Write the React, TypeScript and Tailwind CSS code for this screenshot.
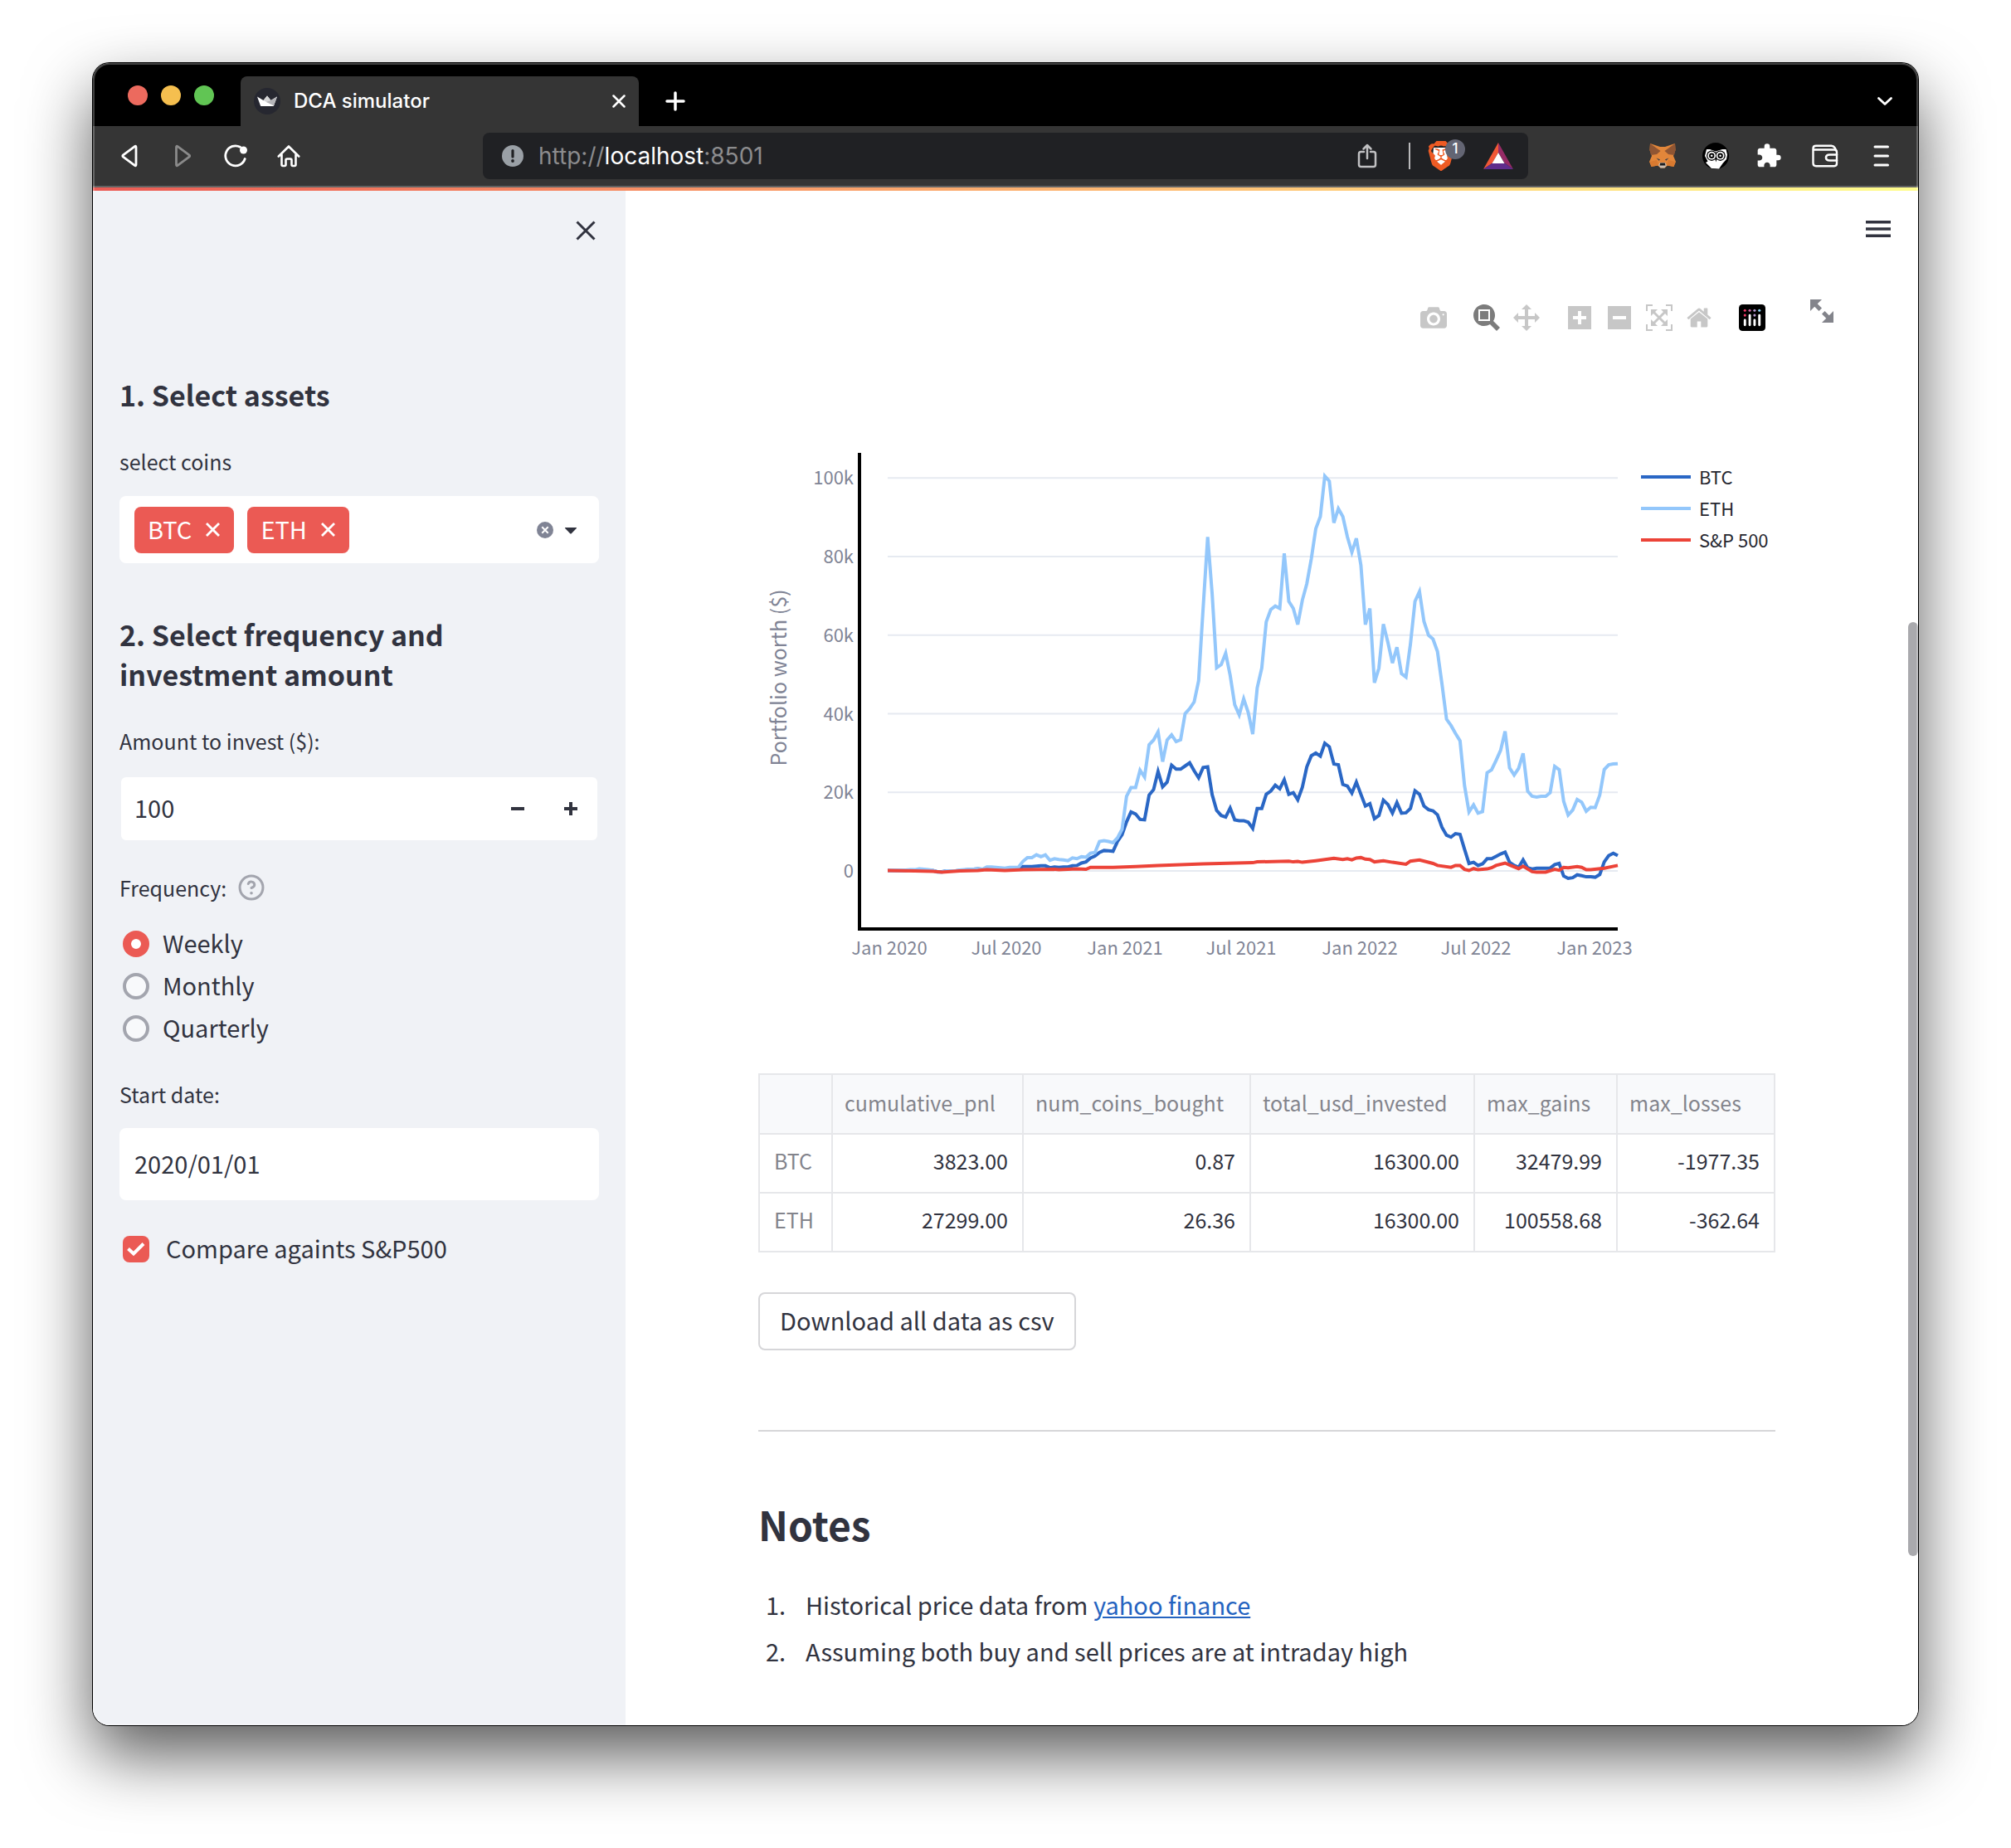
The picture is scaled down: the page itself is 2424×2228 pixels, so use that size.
import React, { useState } from "react";
import { SiBrave } from "react-icons/si";
import { MdExtension } from "react-icons/md";

/* ---------- data ---------- */

const BTC = [
  0.1, 0.1, 0.1, 0.1, 0.1, 0.2, 0.2, 0.2, 0.2, 0.1, 0.1, -0.2, -0.2, 0, 0, 0, 0.1, 0.2, 0.3, 0.4, 0.5, 0.4, 0.6, 0.6, 0.5, 0.5, 0.5, 0.6, 0.6, 0.7,
  1.1, 1.1, 1.1, 1.2, 1.3, 1.3, 0.8, 1.0, 0.9, 1.0, 1.0, 1.3, 1.4, 2.0, 2.3, 3.3, 3.8, 4.7, 5.2, 5.1, 5.0, 7.5, 9.2, 12.5, 15, 14.5, 13.1, 13.0,
  19.3, 20.7, 25.3, 21.4, 22.6, 26.9, 25.9, 25.9, 26.7, 27.5, 25.5, 23.7, 26.3, 26.5, 19.4, 15.4, 14.1, 13.7, 16, 13, 12.8, 12.8, 12.4, 10.8,
  15.9, 15.9, 19.5, 20.3, 21.8, 20.9, 23.2, 19.5, 19.9, 18.1, 21.3, 26.5, 29.3, 30, 29.2, 32.5, 31.6, 27.2, 27, 22, 21.6, 19.8, 22.6, 19.5,
  16.5, 17.1, 13.3, 14.1, 18, 16.9, 14.7, 17.4, 14.7, 14.8, 15.9, 20.4, 19.5, 16.5, 15.6, 15.3, 14.3, 11.1, 9.1, 8.6, 9.5, 9.3, 5.5, 1.9, 2.2,
  1.4, 1.8, 3.1, 3.1, 3.7, 4.3, 4.8, 2.2, 1.4, 0.9, 2.8, 0.8, 0.5, 0.7, 0.7, 0.7, 0.7, 1.6, 1.9, -1.3, -1.9, -1.7, -1.0, -1.2, -1.5, -1.5,
  -1.6, -0.9, 2.3, 3.9, 4.5, 3.9,
];

const ETH = [
  0.1, 0.2, 0.2, 0.2, 0.2, 0.3, 0.3, 0.5, 0.4, 0.3, 0.2, -0.3, -0.3, 0, 0, 0, 0.2, 0.3, 0.4, 0.4, 0.5, 0.4, 1.0, 1.0, 0.9, 0.8, 0.7, 0.9, 0.9, 0.9,
  2.4, 3.4, 3.4, 4.1, 3.6, 4.1, 2.7, 3.1, 2.9, 2.8, 2.6, 3.3, 3.1, 3.6, 3.5, 4.5, 4.7, 7.5, 7.7, 7.5, 7.2, 8.4, 10.6, 19.0, 21.2, 21.2, 25.6, 23.9,
  32.1, 33.3, 35.4, 27.8, 33.3, 34.6, 32.9, 33.4, 40.0, 41.3, 43.0, 48.4, 66.8, 85.0, 70.5, 51.7, 52.5, 55.4, 49.8, 42.3, 39.7, 43.8, 40.3, 34.8,
  46.6, 51.6, 63.4, 66.5, 67.4, 66.8, 80.8, 68.6, 66.8, 62.7, 68.9, 73.1, 79.4, 87.1, 90.2, 100.5, 99.2, 88.6, 92.2, 90.2, 85.0, 81.1, 84.6,
  77.8, 62.7, 66.8, 47.9, 51.6, 62.8, 58.1, 52.9, 56.9, 50.2, 49.3, 57.7, 68.6, 71.1, 63.5, 60.0, 59.0, 55.8, 47.6, 38.6, 37.0, 35.0, 33.1,
  21.7, 15.0, 16.8, 14.7, 15.1, 25.0, 25.7, 28.1, 30.7, 35.5, 26.2, 24.4, 26.1, 29.9, 20.3, 19.0, 18.8, 19, 19, 19.9, 26.6, 25.8, 17.7, 14.2,
  15.5, 18.2, 17.5, 15.2, 16.2, 16.1, 19.3, 25.8, 27.0, 27.2, 27.3,
];

const SP: [number, number][] = [
  [0, 0.1], [6, 0], [10, -0.1], [12, -0.3], [16, 0], [20, 0.1], [22, 0.3], [26, 0.1], [30, 0.3], [37, 0.4], [38, 0.3], [42, 0.5], [44, 0.4], [45, 0.9],
  [50, 0.9], [55, 1.1], [60, 1.4], [65, 1.6], [70, 1.8], [81, 2.1], [82, 2.3], [89, 2.5], [90, 2.3], [91, 2.4], [92, 2.2], [95, 2.6], [99, 3.2],
  [101, 2.9], [102, 3.1], [103, 2.8], [104, 3.3], [105, 3.4], [106, 3.0], [107, 2.9], [108, 2.3], [110, 2.6], [112, 2.2], [115, 1.7], [116, 2.5],
  [118, 2.8], [121, 1.9], [122, 1.4], [125, 0.9], [126, 1.4], [127, 1.4], [128, 0.4], [129, 0.1], [130, 0.6], [131, 0.3], [133, 0.5], [134, 0.8],
  [135, 1.4], [137, 2.0], [138, 1.5], [140, 0.6], [141, 1.2], [143, -0.2], [144, -0.3], [146, -0.3], [148, 0.4], [149, 0.2], [150, 0.9], [151, 0.8],
  [153, 1.1], [154, 0.9], [155, 0.3], [156, 0.3], [159, 0.7], [162, 1.4],
];

const X0 = 156;
const X1 = 1036;
const Y0 = 610;
const PER_K = 4.7375;
const px = (week: number) => X0 + ((X1 - X0) * week) / 162;
const py = (k: number) => Y0 - k * PER_K;
const line = (pts: [number, number][]) => pts.map(([i, v]) => `${px(i).toFixed(1)},${py(v).toFixed(1)}`).join(" ");

const Y_TICKS: [number, string][] = [
  [0, "0"], [20, "20k"], [40, "40k"], [60, "60k"], [80, "80k"], [100, "100k"],
];
const X_TICKS: [number, string][] = [
  [158, "Jan 2020"], [299, "Jul 2020"], [442, "Jan 2021"], [582, "Jul 2021"], [725, "Jan 2022"], [865, "Jul 2022"], [1008, "Jan 2023"],
];
const LEGEND: [string, string][] = [
  ["BTC", "#2a67c5"], ["ETH", "#93c7fb"], ["S&P 500", "#ec4338"],
];

/* ---------- browser chrome ---------- */

function Favicon() {
  return (
    <svg viewBox="0 0 32 32" className="size-8 shrink-0" aria-hidden="true">
      <circle cx="16" cy="16" r="16" fill="#262730" />
      <path d="M4 10.500L11.500 15L16 9.500L20.500 15L28 10.500L24 21.500Q23.700 22 23 22H9Q8.300 22 8 21.500Z" fill="#fff" />
      <path d="M16 9.500L20.500 15L16 17.500L11.500 15Z" fill="#d4d4d6" />
      <path d="M28 10.500L20.500 15L15 17L24 21.500Z" fill="#b4b4b8" />
    </svg>
  );
}

function TabStrip() {
  return (
    <div className="flex h-[76px] items-end bg-black pr-[30px]">
      <div className="flex h-[76px] w-[178px] shrink-0 items-center gap-4 pt-[2px] pl-[42px]">
        <button aria-label="Close window" className="size-6 rounded-full bg-[#ec6a5e]" />
        <button aria-label="Minimise window" className="size-6 rounded-full bg-[#f5bf4f]" />
        <button aria-label="Zoom window" className="size-6 rounded-full bg-[#61c554]" />
      </div>
      <div className="flex h-[60px] w-[480px] items-center rounded-t-lg bg-[#353535] pr-4 pl-4">
        <Favicon />
        <span className="ml-4 flex-1 text-[24px] font-medium text-white">DCA simulator</span>
        <button aria-label="Close tab">
          <svg viewBox="0 0 16 16" className="size-4" fill="none" stroke="#fff" strokeWidth="2.500" strokeLinecap="round">
            <path d="M1.500 1.500l13 13M14.500 1.500l-13 13" />
          </svg>
        </button>
      </div>
      <button aria-label="New tab" className="ml-8 flex h-[60px] items-center">
        <svg viewBox="0 0 24 24" className="size-6" fill="none" stroke="#fff" strokeWidth="3.500" strokeLinecap="round">
          <path d="M12 2v20M2 12h20" />
        </svg>
      </button>
      <button aria-label="Search tabs" className="ml-auto flex h-[60px] items-center">
        <svg viewBox="0 0 20 20" className="size-5" fill="none" stroke="#fff" strokeWidth="2.800" strokeLinecap="round" strokeLinejoin="round">
          <path d="M2.500 6.500L10 13.500L17.500 6.500" />
        </svg>
      </button>
    </div>
  );
}

function Fox() {
  return (
    <svg viewBox="0 0 32 32" className="size-8" aria-hidden="true">
      <path d="M1 1L13 5H19L31 1L31.500 9L29 16L32 23L29.500 29L22 27.500L18.500 30.500H13.500L10 27.500L2.500 29L0 23L3 16L.5 9Z" fill="#e2863a" />
      <path d="M1 1L13.500 10L9 14L2 15L.5 9Z" fill="#8f5533" />
      <path d="M31 1L18.500 10L23 14L30 15L31.500 9Z" fill="#8f5533" />
      <path d="M8.500 18.500l4.500 1.800-1.300 1.500zM23.500 18.500l-4.500 1.800 1.300 1.500z" fill="#3a3f4c" />
      <path d="M1 23l8-2 2 6.500-8.500 1.500zM31 23l-8-2-2 6.500 8.500 1.500z" fill="#d97a30" />
      <path d="M11 27l2-3h6l2 3-2.500 3.500h-5z" fill="#cabdb0" />
      <path d="M13.200 24.500h5.600l.7 3h-7z" fill="#1d1d1f" />
    </svg>
  );
}

function Owl() {
  return (
    <svg viewBox="0 0 32 32" className="size-8" aria-hidden="true">
      <circle cx="16" cy="16" r="16" fill="#000" />
      <path d="M5 8L9 8L16 10.500L24 8H28.500L30 14.500L29 20L24.500 25L20 31.500L11 31L4 24L6.500 22.500L3 16Z" fill="#fff" />
      <circle cx="11.200" cy="15.700" r="6.200" fill="#000" />
      <circle cx="21.600" cy="15.700" r="6.200" fill="#000" />
      <circle cx="11.200" cy="15.700" r="4.900" fill="#fff" />
      <circle cx="21.600" cy="15.700" r="4.900" fill="#fff" />
      <circle cx="11.200" cy="15.700" r="3.200" fill="#000" />
      <circle cx="21.600" cy="15.700" r="3.200" fill="#000" />
      <circle cx="11.200" cy="15.700" r="1.300" fill="#fff" />
      <circle cx="21.600" cy="15.700" r="1.300" fill="#fff" />
      <path d="M15.200 19h2.400L16.400 23.500z" fill="#000" />
    </svg>
  );
}

function Toolbar() {
  return (
    <div className="grid h-[74px] grid-cols-[470px_1fr_470px] border-b-2 border-[#626262] bg-[#353535]">
      <div className="flex items-center gap-9 pl-[30px]">
        <button aria-label="Back">
          <svg viewBox="0 0 28 28" className="size-7" fill="none" stroke="#fff" strokeWidth="2.800" strokeLinejoin="round">
            <path d="M22 3.500Q22 1.500 20.300 2.700L6.500 12.800Q5.100 14 6.500 15.200L20.300 25.300Q22 26.500 22 24.500Z" />
          </svg>
        </button>
        <button aria-label="Forward">
          <svg viewBox="0 0 28 28" className="size-7" fill="none" stroke="#8a8a8a" strokeWidth="2.800" strokeLinejoin="round">
            <path d="M6.500 3.500Q6.500 1.500 8.200 2.700L22 12.800Q23.400 14 22 15.200L8.200 25.300Q6.500 26.500 6.500 24.500Z" />
          </svg>
        </button>
        <button aria-label="Reload">
          <svg viewBox="0 0 28 28" className="size-7" fill="none" stroke="#fff" strokeWidth="2.800" strokeLinecap="round">
            <path d="M19.500 3.300A12 12 0 1 0 25.200 17.500" />
            <circle cx="23.500" cy="7" r="4.500" fill="#fff" stroke="none" />
          </svg>
        </button>
        <button aria-label="Home">
          <svg viewBox="0 0 28 28" className="size-7" fill="none" stroke="#fff" strokeWidth="2.600" strokeLinecap="round" strokeLinejoin="round">
            <path d="M1.800 14.500L14 2.500L26.200 14.500M5.500 12.500V24.500Q5.500 26 7 26H9Q10.500 26 10.500 24.500V19Q10.500 17.500 12 17.500H16Q17.500 17.500 17.500 19V24.500Q17.500 26 19 26H21Q22.500 26 22.500 24.500V12.500" />
          </svg>
        </button>
      </div>

      <div className="my-2 flex items-center rounded-lg bg-[#202124] pr-[18px] pl-[23px]">
        <svg viewBox="0 0 26 26" className="size-[26px] shrink-0" aria-hidden="true">
          <circle cx="13" cy="13" r="13" fill="#9aa0a6" />
          <path d="M13 6.500v7.500" stroke="#202124" strokeWidth="3.200" strokeLinecap="round" />
          <circle cx="13" cy="19" r="1.900" fill="#202124" />
        </svg>
        <span className="ml-[18px] flex-1 text-[28px] text-[#8c8c8e]">
          http://<span className="text-white">localhost</span>:8501
        </span>
        <button aria-label="Share">
          <svg viewBox="0 0 24 30" className="h-[30px] w-6" fill="none" stroke="#c0c0c2" strokeWidth="2.500" strokeLinecap="round" strokeLinejoin="round">
            <path d="M8 10H4.500Q2 10 2 12.500V25.500Q2 28 4.500 28H19.500Q22 28 22 25.500V12.500Q22 10 19.500 10H16M12 18V2.500M7.500 6.500L12 2L16.500 6.500" />
          </svg>
        </button>
        <span className="mx-[22px] ml-[38px] h-8 w-[2px] bg-[#b9b9bb]" />
        <button aria-label="Brave Shields" className="relative mr-9 flex h-9 w-[30px] items-center justify-center">
          <svg viewBox="0 0 30 36" className="absolute inset-0 h-9 w-[30px]" aria-hidden="true">
            <path d="M6 8H24L25 20L15 30L5 20Z" fill="#fff" />
          </svg>
          <SiBrave className="relative size-9 shrink-0 text-[#ef5b24]" />
          <span className="absolute -top-[2px] left-5 flex size-6 items-center justify-center rounded-full bg-[#636573] text-[17px] font-medium text-white">1</span>
        </button>
        <button aria-label="Brave Rewards">
          <svg viewBox="0 0 36 32" className="h-8 w-9" aria-hidden="true">
            <path d="M18 0L0 32L11 24.500L18 12Z" fill="#f15836" />
            <path d="M18 0L36 32L25.500 24.500L18 12Z" fill="#962b66" />
            <path d="M0 32H36L25.500 24.500H11Z" fill="#5f2d8c" />
            <path d="M18 12L25.500 25H10.500Z" fill="#fff" />
          </svg>
        </button>
      </div>

      <div className="flex items-center justify-end gap-8 pr-[29px]">
        <button aria-label="MetaMask"><Fox /></button>
        <button aria-label="Owl extension"><Owl /></button>
        <button aria-label="Extensions"><MdExtension className="size-8 text-white" /></button>
        <button aria-label="Wallet" className="ml-1">
          <svg viewBox="0 0 32 28" className="h-7 w-8" fill="none" stroke="#fff" strokeWidth="2.400" strokeLinecap="round" strokeLinejoin="round">
            <path d="M1.500 5V22.500Q1.500 26.200 5 26.200H27Q30 26.200 30 23V9.500Q30 6.500 27 6.500H3Q1.500 6.500 1.500 5Q1.500 1.800 5 1.800H23.500Q26 1.800 27.500 4L29.500 7.500" />
            <path d="M30 12.500H21.500Q17 12.500 17 16Q17 19.500 21.500 19.500H30" strokeWidth="2.600" />
          </svg>
        </button>
        <button aria-label="Menu" className="ml-[7px]">
          <svg viewBox="0 0 28 28" className="size-7" stroke="#fff" strokeWidth="3" strokeLinecap="round">
            <path d="M5 3h15.500M5 14h15.500M5 25h15.500" />
          </svg>
        </button>
      </div>
    </div>
  );
}

/* ---------- sidebar ---------- */

function Tag({ name }: { name: string }) {
  return (
    <span className="flex h-14 items-center rounded-lg bg-[#eb5a54] pr-[17px] pl-4 text-[29px] leading-none text-white">
      <span className="pb-1 leading-[40px]">{name}</span>
      <button aria-label={`Remove ${name}`} className="ml-[17px]">
        <svg viewBox="0 0 17 17" className="size-[17px]" fill="none" stroke="#fff" strokeWidth="2.800">
          <path d="M1 1l15 15M16 1L1 16" />
        </svg>
      </button>
    </span>
  );
}

function Sidebar() {
  const [amount, setAmount] = useState("100");
  const [freq, setFreq] = useState("Weekly");
  const [date, setDate] = useState("2020/01/01");
  const [compare, setCompare] = useState(true);
  return (
    <aside className="flex w-[642px] shrink-0 flex-col bg-[#f0f2f6] px-8 text-[#31333f]">
      <div className="flex h-24 items-center justify-end pr-1">
        <button aria-label="Close sidebar">
          <svg viewBox="0 0 24 24" className="size-6" fill="none" stroke="#31333f" strokeWidth="3">
            <path d="M1.500 1.500l21 21M22.500 1.500l-21 21" />
          </svg>
        </button>
      </div>

      <h3 className="mt-[126px] text-[34px] leading-[48px] font-semibold">1. Select assets</h3>
      <label htmlFor="coins" className="mt-9 text-[25px] leading-[40px]">select coins</label>
      <div className="mt-[22px] flex h-[81px] items-center gap-4 rounded-lg bg-white pr-[26px] pl-[18px]">
        <Tag name="BTC" />
        <Tag name="ETH" />
        <input id="coins" role="combobox" aria-expanded="false" aria-controls="coins" className="min-w-0 flex-1 bg-transparent text-[29px] outline-none" />
        <button aria-label="Clear all" className="-mr-[3px]">
          <svg viewBox="0 0 20 20" className="size-5">
            <circle cx="10" cy="10" r="10" fill="#808495" />
            <path d="M6.300 6.300l7.400 7.400M13.700 6.300l-7.400 7.400" stroke="#fff" strokeWidth="2" />
          </svg>
        </button>
        <button aria-label="Open">
          <svg viewBox="0 0 16 16" className="size-4">
            <path d="M1.500 5H14.500Q15.500 5 14.800 6L9 12Q8 13 7 12L1.200 6Q.5 5 1.500 5Z" fill="#31333f" />
          </svg>
        </button>
      </div>

      <h3 className="mt-[62px] text-[34px] leading-[48px] font-semibold">2. Select frequency and investment amount</h3>
      <label htmlFor="amount" className="mt-9 text-[25px] leading-[40px]">Amount to invest ($):</label>
      <div className="mt-[22px] flex h-20 items-center rounded-lg border-2 border-[#f0f2f6] bg-white pr-6 pl-4">
        <input id="amount" value={amount} onChange={(e) => setAmount(e.target.value)} inputMode="numeric" className="min-w-0 flex-1 bg-transparent pb-1 text-[29px] leading-[44px] outline-none" />
        <button aria-label="Decrease" className="mr-12">
          <svg viewBox="0 0 16 16" className="size-4"><path d="M0 8h16" stroke="#31333f" strokeWidth="4" /></svg>
        </button>
        <button aria-label="Increase">
          <svg viewBox="0 0 16 16" className="size-4"><path d="M0 8h16M8 0v16" stroke="#31333f" strokeWidth="4" /></svg>
        </button>
      </div>

      <fieldset className="mt-[35px]">
        <legend className="flex items-center gap-3 text-[25px] leading-[40px]">
          Frequency:
          <svg viewBox="0 0 24 24" className="size-9" fill="none" stroke="#a3a5ae" strokeWidth="2" strokeLinecap="round" strokeLinejoin="round" aria-label="Help">
            <circle cx="12" cy="12" r="9.300" />
            <path d="M9.500 9a2.600 2.600 0 0 1 5 .8c0 1.700-2.500 2.500-2.500 2.500" />
            <path d="M12 16.500h.01" strokeWidth="2.400" />
          </svg>
        </legend>
        <div className="mt-[22px]">
          {["Weekly", "Monthly", "Quarterly"].map((f) => (
            <label key={f} className="flex h-[51px] items-center gap-4 pl-1 text-[29px] leading-[44px]">
              <input
                type="radio"
                name="frequency"
                checked={freq === f}
                onChange={() => setFreq(f)}
                className="size-8 appearance-none rounded-full border-4 border-[#a3a5ae] bg-[#f8f9fb] checked:border-[10px] checked:border-[#eb5a54] checked:bg-white"
              />
              <span className="pb-1">{f}</span>
            </label>
          ))}
        </div>
      </fieldset>

      <label htmlFor="date" className="mt-[34px] text-[25px] leading-[40px]">Start date:</label>
      <input id="date" value={date} onChange={(e) => setDate(e.target.value)} className="mt-[21px] h-[87px] rounded-lg bg-white px-[18px] pb-1 text-[29px] outline-none" />

      <label className="mt-[35px] flex items-center gap-[20px] pl-1 text-[29px] leading-[44px]">
        <span className="relative size-8">
          <input type="checkbox" checked={compare} onChange={(e) => setCompare(e.target.checked)} className="peer block size-8 appearance-none rounded-lg border-4 border-[#a3a5ae] bg-[#f8f9fb] checked:border-0 checked:bg-[#eb5a54]" />
          <svg viewBox="0 0 32 32" className="pointer-events-none absolute inset-0 hidden size-8 peer-checked:block" fill="none" stroke="#fff" strokeWidth="4">
            <path d="M6.500 15.500L13 21.500L25 9.500" />
          </svg>
        </span>
        <span className="pb-1">Compare againts S&amp;P500</span>
      </label>
    </aside>
  );
}

/* ---------- chart ---------- */

const MODE_ICONS: { label: string; w: number; d: string; active?: boolean; gap?: boolean }[] = [
  { label: "Download plot as a png", w: 1000, d: "m500 450c-83 0-150-67-150-150 0-83 67-150 150-150 83 0 150 67 150 150 0 83-67 150-150 150z m400 150h-120c-16 0-34 13-39 29l-31 93c-6 15-23 28-40 28h-340c-16 0-34-13-39-28l-31-94c-6-15-23-28-40-28h-120c-55 0-100-45-100-100v-450c0-55 45-100 100-100h800c55 0 100 45 100 100v450c0 55-45 100-100 100z m-400-550c-138 0-250 112-250 250 0 138 112 250 250 250 138 0 250-112 250-250 0-138-112-250-250-250z m365 380c-19 0-35 16-35 35 0 19 16 35 35 35 19 0 35-16 35-35 0-19-16-35-35-35z" },
  { label: "Zoom", w: 1000, active: true, gap: true, d: "m1000-25l-250 251c40 63 63 138 63 218 0 224-182 406-407 406-224 0-406-182-406-406s183-406 407-406c80 0 155 22 218 62l250-250 125 125z m-812 250l0 438 437 0 0-438-437 0z m62 375l313 0 0-312-313 0 0 312z" },
  { label: "Pan", w: 1000, d: "m1000 350l-187 188 0-125-250 0 0 250 125 0-188 187-187-187 125 0 0-250-250 0 0 125-188-188 186-187 0 125 252 0 0-250-125 0 187-188 188 188-125 0 0 250 250 0 0-126 187 188z" },
  { label: "Zoom in", w: 875, gap: true, d: "m1 787l0-875 875 0 0 875-875 0z m687-500l-187 0 0-187-125 0 0 187-188 0 0 125 188 0 0 187 125 0 0-187 187 0 0-125z" },
  { label: "Zoom out", w: 875, d: "m0 788l0-876 875 0 0 876-875 0z m688-500l-500 0 0 125 500 0 0-125z" },
  { label: "Autoscale", w: 1000, d: "m250 850l-187 0-63 0 0-62 0-188 63 0 0 188 187 0 0 62z m688 0l-188 0 0-62 188 0 0-188 62 0 0 188 0 62-62 0z m-875-938l0 188-63 0 0-188 0-62 63 0 187 0 0 62-187 0z m875 188l0-188-188 0 0-62 188 0 62 0 0 62 0 188-62 0z m-125 188l-1 0-93-94-156 156 156 156 92-93 2 0 0 250-250 0 0-2 93-92-156-156-156 156 94 92 0 2-250 0 0-250 0 0 93 93 157-156-157-156-93 94 0 0 0-250 250 0 0 0-94 93 156 157 156-157-93-93 0 0 250 0 0 250z" },
  { label: "Reset axes", w: 928, d: "m786 296v-267q0-15-11-26t-25-10h-214v214h-143v-214h-214q-15 0-25 10t-11 26v267q0 1 0 2t0 2l321 264 321-264q1-1 1-4z m124 39l-34-41q-5-5-12-6h-2q-7 0-12 3l-386 322-386-322q-7-4-13-4-7 2-12 7l-35 41q-4 5-3 13t6 12l401 334q18 15 42 15t43-15l136-114v109q0 8 5 13t13 5h107q8 0 13-5t5-13v-227l122-102q5-5 6-12t-4-13z" },
];

function ModeBar() {
  return (
    <div className="mt-[39px] flex items-start justify-end pr-[90px]">
      <div className="flex gap-4 pt-[6px]">
        {MODE_ICONS.map((m) => (
          <button key={m.label} aria-label={m.label} className={m.gap ? "ml-4" : ""}>
            <svg viewBox={`0 0 ${m.w} 1000`} className={m.active ? "size-8 fill-[#7c7c7c]" : "size-8 fill-[#c7c7c7]"}>
              <path d={m.d} transform="matrix(1 0 0 -1 0 850)" />
            </svg>
          </button>
        ))}
        <a href="#plotly" aria-label="Produced with Plotly" className="ml-4">
          <svg viewBox="0 0 132 132" className="size-8">
            <rect width="132" height="132" rx="18" />
            <g fill="#ee3a66">
              <circle cx="30" cy="30" r="6.500" />
              <circle cx="30" cy="54" r="6.500" />
            </g>
            <circle cx="54" cy="30" r="6.500" fill="#cd6aa5" />
            <circle cx="78" cy="30" r="6.500" fill="#b59ad0" />
            <circle cx="78" cy="54" r="6.500" fill="#b59ad0" />
            <circle cx="102" cy="30" r="6.500" fill="#8fd6f5" />
            <path d="M30 78v24M54 54v48M78 78v24M102 54v48" stroke="#fff" strokeWidth="12" strokeLinecap="round" />
          </svg>
        </a>
      </div>
      <button aria-label="View fullscreen" className="ml-[54px]">
        <svg viewBox="0 0 8 8" className="size-7 fill-[#83848b]">
          <path d="M0 0v4l1.500-1.500L3 4l1-1-1.500-1.500L4 0H0zm5 4L4 5l1.500 1.500L4 8h4V4L6.500 5.500 5 4z" />
        </svg>
      </button>
    </div>
  );
}

function Chart() {
  return (
    <svg viewBox="0 0 1226 794" className="mt-[41px] block w-full" role="img" aria-label="Portfolio worth over time">
      {Y_TICKS.map(([k]) => (
        <path key={k} d={`M${X0} ${py(k)}H${X1}`} stroke="#e6eaf1" strokeWidth="2" />
      ))}
      <g fill="none" strokeWidth="4">
        <polyline points={line(BTC.map((v, i) => [i, v] as [number, number]))} stroke="#2a67c5" />
        <polyline points={line(ETH.map((v, i) => [i, v] as [number, number]))} stroke="#93c7fb" />
        <polyline points={line(SP)} stroke="#ec4338" />
      </g>
      <path d="M122 106V680H1036" fill="none" stroke="#000" strokeWidth="4" />
      <g fill="#808495" fontSize="22">
        {Y_TICKS.map(([k, t]) => (
          <text key={t} x="115" y={py(k) + 8} textAnchor="end">{t}</text>
        ))}
        {X_TICKS.map(([x, t]) => (
          <text key={t} x={x} y="711" textAnchor="middle">{t}</text>
        ))}
      </g>
      <text transform="translate(34 377) rotate(-90)" textAnchor="middle" fontSize="25" fill="#808495">Portfolio worth ($)</text>
      {LEGEND.map(([name, color], i) => (
        <g key={name}>
          <path d={`M1064 ${135 + i * 38}h60`} stroke={color} strokeWidth="4" />
          <text x="1134" y={144 + i * 38} fontSize="22" fill="#262730">{name}</text>
        </g>
      ))}
    </svg>
  );
}

/* ---------- results ---------- */

const HEAD = ["cumulative_pnl", "num_coins_bought", "total_usd_invested", "max_gains", "max_losses"];
const ROWS = [
  ["BTC", "3823.00", "0.87", "16300.00", "32479.99", "-1977.35"],
  ["ETH", "27299.00", "26.36", "16300.00", "100558.68", "-362.64"],
];

function Results() {
  return (
    <table className="mt-[60px] w-full table-fixed border-collapse border-2 border-[#e6e7ea] text-[25px] leading-[40px]">
      <colgroup>
        <col className="w-[88px]" />
        <col className="w-[230px]" />
        <col className="w-[274px]" />
        <col className="w-[270px]" />
        <col className="w-[172px]" />
        <col className="w-[190px]" />
      </colgroup>
      <thead>
        <tr className="h-[72px] bg-[#f8f9fb]">
          <td className="border-2 border-[#e6e7ea]" />
          {HEAD.map((h) => (
            <th key={h} scope="col" className="border-2 border-[#e6e7ea] pb-1 pl-[14px] text-left font-normal text-[#83848c]">{h}</th>
          ))}
        </tr>
      </thead>
      <tbody>
        {ROWS.map(([name, ...vals]) => (
          <tr key={name} className="h-[71px]">
            <th scope="row" className="border-2 border-[#e6e7ea] pb-2 pl-[17px] text-left font-normal text-[#83848c]">{name}</th>
            {vals.map((v, i) => (
              <td key={i} className="border-2 border-[#e6e7ea] pr-[17px] pb-2 text-right">{v}</td>
            ))}
          </tr>
        ))}
      </tbody>
    </table>
  );
}

function Main() {
  return (
    <main className="flex min-w-0 flex-1 bg-white text-[#31333f]">
      <div className="min-w-0 flex-1">
        <div className="flex h-[92px] items-center justify-end pr-[21px]">
          <button aria-label="Main menu">
            <svg viewBox="0 0 30 20" className="h-5 w-[30px]" stroke="#31333f" strokeWidth="3.400">
              <path d="M0 1.700h30M0 10h30M0 18.300h30" />
            </svg>
          </button>
        </div>
        <ModeBar />
        <div className="px-40">
          <Chart />
          <Results />
          <button className="mt-12 h-[70px] rounded-lg border-2 border-[#d6d6d9] px-6 pb-1 text-[29px] leading-[44px]">
            Download all data as csv
          </button>
          <hr className="mt-24 border-t-2 border-[#d6d6d9]" />
          <h2 className="mt-[77px] text-[48px] leading-[68px] font-semibold">Notes</h2>
          <ol className="mt-[41px] space-y-3 pl-[9px] text-[29px] leading-[44px]">
            <li className="flex">
              <span className="w-12">1.</span>
              <span>
                Historical price data from <a href="#yahoo-finance" className="text-[#2463c0] underline">yahoo finance</a>
              </span>
            </li>
            <li className="flex">
              <span className="w-12">2.</span>
              <span>Assuming both buy and sell prices are at intraday high</span>
            </li>
          </ol>
        </div>
      </div>
      <div className="w-3 pt-[520px]">
        <div className="h-[1126px] rounded-full bg-[#a9a9ad]" />
      </div>
    </main>
  );
}

export default function App() {
  return (
    <div className="flex min-h-screen flex-col bg-white px-28 pt-[76px] pb-[148px] font-['Inter','Liberation_Sans',sans-serif]">
      <div className="relative flex flex-1 flex-col overflow-hidden rounded-[20px] shadow-[0_0_0_1px_#000,0_36px_80px_rgba(0,0,0,0.65)]">
        <TabStrip />
        <Toolbar />
        <div className="h-1 bg-linear-to-r from-[#eb5a54] to-[#fffd8c]" />
        <div className="flex flex-1 font-['Noto_Sans_CJK_SC','Noto_Sans',sans-serif]">
          <Sidebar />
          <Main />
        </div>
        <div className="pointer-events-none absolute inset-0 rounded-[20px] border-2 border-white/25" />
      </div>
    </div>
  );
}
